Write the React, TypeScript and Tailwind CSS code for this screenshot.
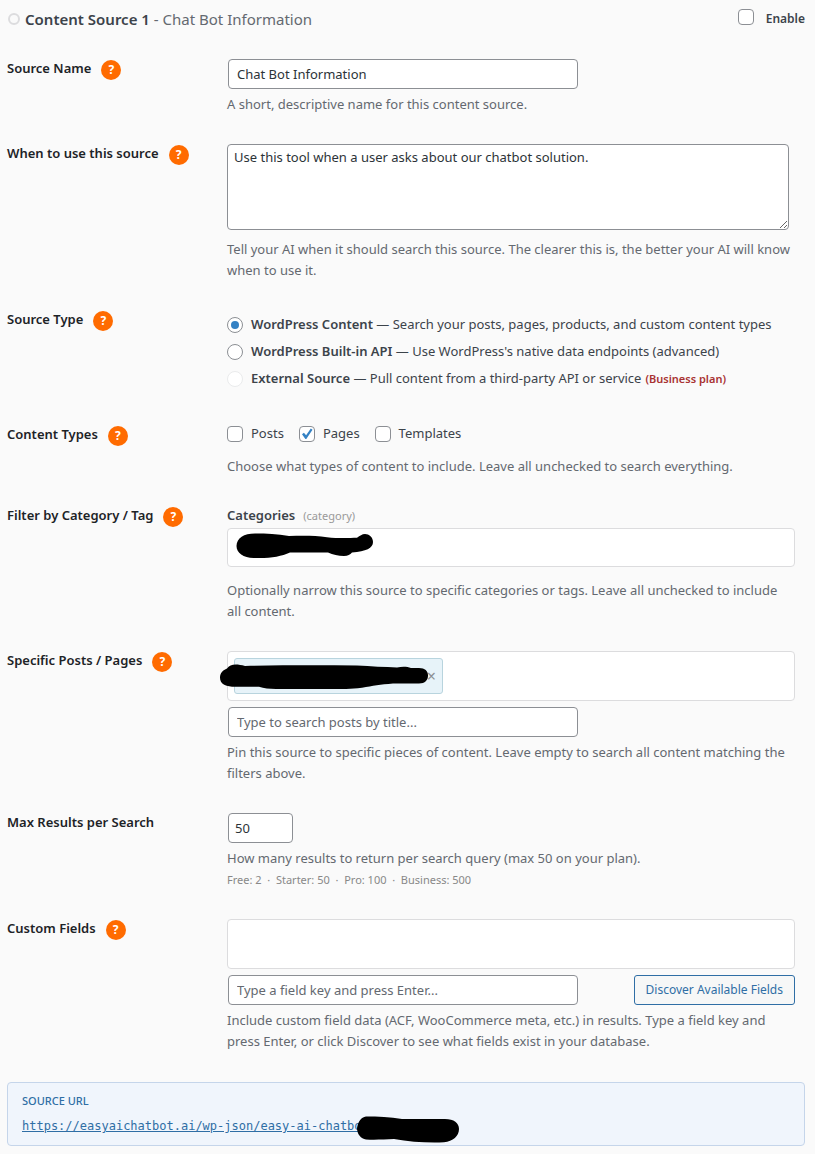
import React, { useState } from 'react';
import clsx from 'clsx';

const inputClass =
  'block h-[30px] w-full max-w-[350px] rounded-[4px] border border-[#8c8f94] bg-white px-2 text-[13px] text-[#2c3338] placeholder:text-[#646970] ml-px focus:outline-none focus:border-[#2271b1]';

const sourceTypes = [
  { id: 'content', name: 'WordPress Content', text: 'Search your posts, pages, products, and custom content types' },
  { id: 'api', name: 'WordPress Built-in API', text: "Use WordPress's native data endpoints (advanced)" },
  { id: 'external', name: 'External Source', text: 'Pull content from a third-party API or service', plan: '(Business plan)' },
];

const HelpIcon = () => (
  <button
    type="button"
    aria-label="Help"
    className="flex h-5 w-5 shrink-0 items-center justify-center self-end rounded-full bg-[#ff6b00] text-[12px] font-bold leading-none text-white"
  >
    ?
  </button>
);

type RowProps = {
  label: string;
  htmlFor?: string;
  help?: boolean;
  children: React.ReactNode;
};

const Row = ({ label, htmlFor, help = true, children }: RowProps) => (
  <div className="grid grid-cols-[220px_minmax(0,1fr)] pt-[15px] pb-[14px] pr-[10px]">
    <div className="flex h-[21px] items-start gap-[10px] text-[13px] font-semibold leading-[18px] text-[#1d2327]">
      {htmlFor ? <label htmlFor={htmlFor}>{label}</label> : <span>{label}</span>}
      {help && <HelpIcon />}
    </div>
    <div>{children}</div>
  </div>
);

const Description = ({ className, children }: { className?: string; children: React.ReactNode }) => (
  <p className={clsx('text-[13px] leading-[21px] text-[#646970]', className)}>{children}</p>
);

type CheckboxProps = {
  checked: boolean;
  onChange: () => void;
  children: React.ReactNode;
};

const Checkbox = ({ checked, onChange, children }: CheckboxProps) => (
  <label className="flex h-[18px] items-center">
    <span className="relative block h-4 w-4">
      <input
        type="checkbox"
        checked={checked}
        onChange={onChange}
        className="peer block h-4 w-4 appearance-none rounded-[4px] border border-[#8c8f94] bg-white"
      />
      <svg viewBox="0 0 16 16" className="pointer-events-none absolute inset-0 hidden h-4 w-4 peer-checked:block">
        <path d="M3 8.200 4.900 6.700l2.200 2.500L11.800 2.600l1.700 1.200-6.200 9.200H6.400z" fill="#3582c4" />
      </svg>
    </span>
    {children}
  </label>
);

const App = () => {
  const [enabled, setEnabled] = useState(false);
  const [name, setName] = useState('Chat Bot Information');
  const [usage, setUsage] = useState('Use this tool when a user asks about our chatbot solution.');
  const [sourceType, setSourceType] = useState('content');
  const [types, setTypes] = useState<string[]>(['Pages']);
  const [maxResults, setMaxResults] = useState('50');

  const toggleType = (type: string) => {
    setTypes(types.includes(type) ? types.filter((t) => t !== type) : [...types, type]);
  };

  return (
    <main className="min-h-screen bg-[#fafafa] pl-[7px] pr-[10px] pb-2 font-['Noto_Sans','Open_Sans',sans-serif] text-[13px] text-[#3c434a]">
      {/* Header */}
      <header className="flex h-11 items-start justify-between pt-2">
        <h2 className="flex items-center text-[15px] leading-[22px] text-[#646970]">
          <span className="ml-px mr-[5px] h-3 w-3 rounded-full border-2 border-[#dcdcde]" />
          <span>
            <strong className="font-semibold text-[#3c434a]">Content Source 1</strong> - {name}
          </span>
        </h2>
        <Checkbox checked={enabled} onChange={() => setEnabled(!enabled)}>
          <span className="ml-3 pt-1 text-[12px] font-semibold">Enable</span>
        </Checkbox>
      </header>

      <Row label="Source Name" htmlFor="source-name">
        <input id="source-name" type="text" value={name} onChange={(e) => setName(e.target.value)} className={inputClass} />
        <Description className="mt-[5px]">A short, descriptive name for this content source.</Description>
      </Row>

      <Row label="When to use this source" htmlFor="source-usage">
        <textarea
          id="source-usage"
          value={usage}
          onChange={(e) => setUsage(e.target.value)}
          className="block h-[86px] w-[99%] resize rounded-[4px] border border-[#8c8f94] bg-white px-[6px] py-[2px] text-[13px] leading-5 text-[#2c3338] focus:outline-none"
        />
        <Description className="mt-[9px]">
          Tell your AI when it should search this source. The clearer this is, the better your AI will know when to use it.
        </Description>
      </Row>

      <Row label="Source Type">
        <div className="flex flex-col gap-[6px] pt-1 pb-[7px]">
          {sourceTypes.map((type) => (
            <label key={type.id} className="flex items-center leading-[21px]">
              <input
                type="radio"
                name="source-type"
                checked={sourceType === type.id}
                disabled={Boolean(type.plan)}
                onChange={() => setSourceType(type.id)}
                className="mr-2 flex h-4 w-4 shrink-0 appearance-none items-center justify-center rounded-full border border-[#8c8f94] bg-white checked:before:h-2 checked:before:w-2 checked:before:rounded-full checked:before:bg-[#3582c4] disabled:border-[#eaebec]"
              />
              <span>
                <strong className="font-semibold">{type.name}</strong> — {type.text}
                {type.plan && <span className="ml-1 text-[11px] font-semibold text-[#a83232]">{type.plan}</span>}
              </span>
            </label>
          ))}
        </div>
      </Row>

      <Row label="Content Types">
        <div className="flex gap-[15px]">
          {['Posts', 'Pages', 'Templates'].map((type) => (
            <Checkbox key={type} checked={types.includes(type)} onChange={() => toggleType(type)}>
              <span className="ml-2">{type}</span>
            </Checkbox>
          ))}
        </div>
        <Description className="mt-[13px]">
          Choose what types of content to include. Leave all unchecked to search everything.
        </Description>
      </Row>

      <Row label="Filter by Category / Tag">
        <div className="h-5 leading-[18px]">
          <strong className="font-semibold">Categories</strong>
          <span className="ml-2 text-[11px] text-[#999]">(category)</span>
        </div>
        <div className="relative mt-[2px] h-[39px] rounded-[4px] border border-[#dcdcde] bg-white">
          <svg viewBox="0 0 138 26" className="absolute left-2 top-1 h-[26px] w-[138px]">
            <path
              d="M.5 13C.5 5 8 .500 19 .500c12 0 22 .500 34 2.500 14-.400 26-.500 38 1.200 11 1.300 22 .800 30 .600 3-2 5-3.800 8-3.800 4 0 8 3 8 8 0 6-7 9.500-21 10.500-2 2-4 3.500-8 3.500-6 0-11-1.500-16-3.500H54c-9 4-20 6-35 5.500C8 25.500.5 20 .5 13z"
              fill="#000"
            />
          </svg>
        </div>
        <Description className="mt-[13px]">
          Optionally narrow this source to specific categories or tags. Leave all unchecked to include all&nbsp;content.
        </Description>
      </Row>

      <Row label="Specific Posts / Pages" htmlFor="post-search">
        <div className="relative h-[50px] rounded-[4px] border border-[#dcdcde] bg-white px-[6px] py-[6px]">
          <div className="flex h-9 w-[209px] items-center justify-end rounded-[3px] border border-[#b8d4de] bg-[#e7f3f9] pr-[6px]">
            <button type="button" aria-label="Remove" className="text-[16px] leading-none text-[#8c8f94]">
              ×
            </button>
          </div>
          <svg viewBox="0 0 208 25" className="absolute -left-2 top-3 h-[25px] w-[208px]">
            <path
              d="M0 13.500C0 9 3 6 7 4.500 10 0 16-.5 25 2c38-.8 76-.8 112-.4 14 .8 28 1.600 40 1.900 5-1.100 10-1.100 14 .5h8c6 0 9 3 9 7.500s-3 8-9 8h-26c-13 1-20 2.300-31 4.300-6 .7-10 1.200-16 1.200H56c-7 0-12-1-17-2.300H12C4 22 0 19 0 13.500z"
              fill="#000"
            />
          </svg>
        </div>
        <input id="post-search" type="text" placeholder="Type to search posts by title..." className={clsx(inputClass, 'mt-[6px]')} />
        <Description className="mt-[5px]">
          Pin this source to specific pieces of content. Leave empty to search all content matching the filters above.
        </Description>
      </Row>

      <Row label="Max Results per Search" htmlFor="max-results" help={false}>
        <input
          id="max-results"
          type="text"
          inputMode="numeric"
          value={maxResults}
          onChange={(e) => setMaxResults(e.target.value)}
          className="ml-px block h-[30px] w-[65px] rounded-[4px] border border-[#8c8f94] bg-white px-[6px] text-[13px] text-[#2c3338] focus:outline-none"
        />
        <Description className="mt-[5px]">How many results to return per search query (max 50 on your plan).</Description>
        <p className="text-[11px] leading-[21px] text-[#888]">
          Free: 2 &nbsp;·&nbsp; Starter: 50 &nbsp;·&nbsp; Pro: 100 &nbsp;·&nbsp; Business: 500
        </p>
      </Row>

      <Row label="Custom Fields" htmlFor="field-key">
        <div className="h-[50px] rounded-[4px] border border-[#dcdcde] bg-white" />
        <div className="mt-[6px] flex justify-between gap-4">
          <input id="field-key" type="text" placeholder="Type a field key and press Enter..." className={inputClass} />
          <button
            type="button"
            className="h-[30px] shrink-0 rounded-[3px] border border-[#2f6ea5] bg-[#f6f7f7] px-[11px] text-[12px] text-[#2f6ea5]"
          >
            Discover Available Fields
          </button>
        </div>
        <Description className="mt-[5px]">
          Include custom field data (ACF, WooCommerce meta, etc.) in results. Type a field key and press Enter, or click
          Discover to see what fields exist in your database.
        </Description>
      </Row>

      {/* Source URL */}
      <section className="mt-4 h-16 rounded-[4px] border border-[#c5d5ea] bg-[#f0f5fc] px-[14px] pt-2 text-[#2f6ea5]">
        <h3 className="text-[11px] font-medium uppercase leading-5">Source URL</h3>
        <div className="relative mt-1 leading-5">
          <a
            href="https://easyaichatbot.ai/wp-json/easy-ai-chatbo"
            className="font-['DejaVu_Sans_Mono',monospace] text-[12px] underline"
          >
            https://easyaichatbot.ai/wp-json/easy-ai-chatbo
          </a>
          <svg viewBox="0 0 102 27" className="absolute left-[335px] top-px h-[27px] w-[102px]">
            <path
              d="M0 12C1 6 4 1 9 .5c12 0 24 .5 36 2.500h43c9 0 14 4 14 10 0 7-6 12.500-15 13.300-16 .6-34-.3-50-3.300-10 .4-18 1-28 .5C4 23 0 18 0 12z"
              fill="#000"
            />
          </svg>
        </div>
      </section>
    </main>
  );
};

export default App;
